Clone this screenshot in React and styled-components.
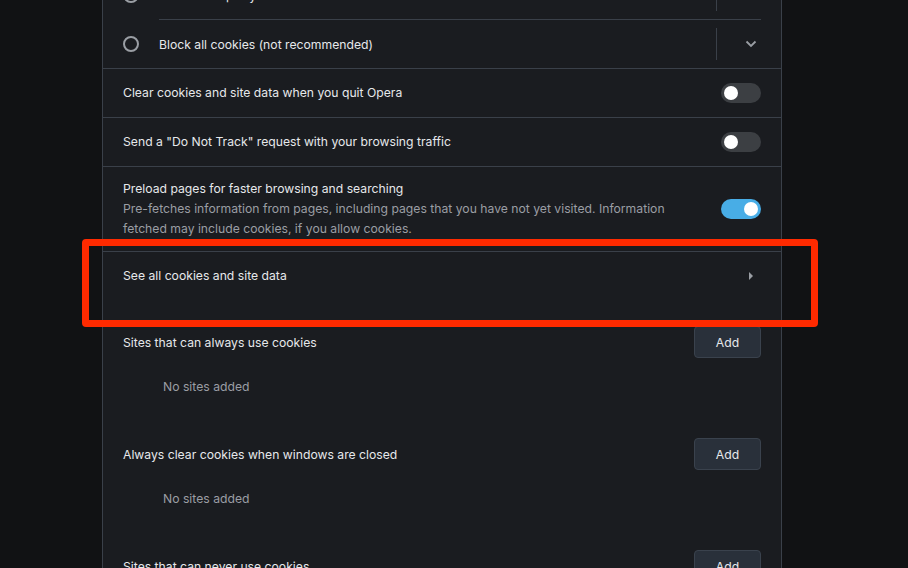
import React from "react";
import styled, { createGlobalStyle } from "styled-components";

const Global = createGlobalStyle`
  html, body { margin: 0; padding: 0; background: #111214; }
  body { font-family: Inter, "Noto Sans", "Liberation Sans", sans-serif; -webkit-font-smoothing: antialiased; }
  #root { height: 568px; overflow: hidden; }
`;

const Page = styled.div`
  display: flex;
  align-items: flex-start;
  height: 568px;
  overflow: hidden;
  background: #111214;
`;

const Panel = styled.div`
  margin-left: 102px;
  width: 678px;
  margin-top: -29px;
  background: #1a1c20;
  border-left: 1px solid #3a4049;
  border-right: 1px solid #3a4049;
  display: flex;
  flex-direction: column;
  flex: none;
  font-size: 12.2px;
  color: #e6e8eb;
  & > * { flex: none; }
`;

const RadioGroup = styled.div`
  display: flex;
  flex-direction: column;
  border-bottom: 1px solid #3a4049;
`;

const RadioRow = styled.div`
  display: flex;
  align-items: center;
  height: 48px;
  padding: 0 20px;
  position: relative;
  flex: none;
  ${(p) =>
    p.$divided &&
    `
    margin-top: 1px;
    &::before {
      content: "";
      position: absolute;
      top: -1px;
      left: 56px;
      right: 20px;
      height: 1px;
      background: #3a4049;
    }
  `}
`;

const RadioCircle = styled.span`
  width: 16px;
  height: 16px;
  box-sizing: border-box;
  border-radius: 50%;
  border: 2px solid #9a9ea4;
  flex: none;
`;

const RadioLabel = styled.span`
  flex: 1;
  margin-left: 20px;
  color: #e6e8eb;
`;

const ExpandArea = styled.div`
  display: flex;
  align-items: center;
  height: 32px;
  border-left: 1px solid #3a4049;
  padding-left: 24px;
`;

const IconBox = styled.span`
  width: 20px;
  height: 20px;
  display: flex;
  align-items: center;
  justify-content: center;
  color: #9a9ea4;
  flex: none;
`;

const Row = styled.div`
  display: flex;
  align-items: center;
  min-height: ${(p) => (p.$tall ? "0" : "48px")};
  padding: ${(p) => (p.$tall ? "12px 20px" : "0 20px")};
  box-sizing: content-box;
  border-bottom: ${(p) => (p.$noBorder ? "none" : "1px solid #3a4049")};
  position: relative;
`;

const RowText = styled.div`
  flex: 1;
  display: flex;
  flex-direction: column;
  line-height: 20px;
  padding-right: 24px;
`;

const Title = styled.div`
  color: #e6e8eb;
`;

const Sub = styled.div`
  color: #9a9ea4;
`;

const Track = styled.span`
  width: 40px;
  height: 20px;
  border-radius: 10px;
  background: ${(p) => (p.$on ? "#48ade6" : "#3c3f43")};
  display: flex;
  align-items: center;
  justify-content: ${(p) => (p.$on ? "flex-end" : "flex-start")};
  padding: 0 3px;
  box-sizing: border-box;
  flex: none;
`;

const Knob = styled.span`
  width: 14px;
  height: 14px;
  border-radius: 50%;
  background: #ffffff;
`;

const Highlight = styled.div`
  position: absolute;
  left: -21px;
  top: -13px;
  width: 736px;
  height: 88px;
  box-sizing: border-box;
  border: 7px solid #ff2a00;
  border-radius: 4px;
  pointer-events: none;
`;

const SiteSection = styled.div`
  display: flex;
  flex-direction: column;
  padding: 0 20px;
`;

const SiteHeader = styled.div`
  display: flex;
  align-items: center;
  justify-content: space-between;
  height: 32px;
`;

const AddButton = styled.button`
  width: 67px;
  height: 32px;
  box-sizing: border-box;
  background: #29303a;
  border: 1px solid #3a424d;
  border-radius: 4px;
  color: #e6e8eb;
  font-family: inherit;
  font-size: 12.2px;
  padding: 0;
`;

const Empty = styled.div`
  color: #9a9ea4;
  line-height: 20px;
  padding: 19px 0 41px 40px;
`;

const Spacer = styled.div`
  height: 26px;
`;

const Toggle = ({ on }) => (
  <Track $on={on}>
    <Knob />
  </Track>
);

const ChevronDown = () => (
  <svg width="12" height="8" viewBox="0 0 12 8" fill="none">
    <path d="M1.5 1.5 L6 6 L10.5 1.5" stroke="currentColor" strokeWidth="1.8" />
  </svg>
);

const TriangleRight = () => (
  <svg width="6" height="10" viewBox="0 0 6 10">
    <path d="M1 1 L5 5 L1 9 Z" fill="currentColor" />
  </svg>
);

const sites = [
  "Sites that can always use cookies",
  "Always clear cookies when windows are closed",
  "Sites that can never use cookies",
];

export default function App() {
  return (
    <>
      <Global />
      <Page>
        <Panel>
          <RadioGroup>
            <RadioRow>
              <RadioCircle />
              <RadioLabel>Block third-party cookies</RadioLabel>
              <ExpandArea>
                <IconBox>
                  <ChevronDown />
                </IconBox>
              </ExpandArea>
            </RadioRow>
            <RadioRow $divided>
              <RadioCircle />
              <RadioLabel>Block all cookies (not recommended)</RadioLabel>
              <ExpandArea>
                <IconBox>
                  <ChevronDown />
                </IconBox>
              </ExpandArea>
            </RadioRow>
          </RadioGroup>
          <Row>
            <RowText>
              <Title>Clear cookies and site data when you quit Opera</Title>
            </RowText>
            <Toggle />
          </Row>
          <Row>
            <RowText>
              <Title>Send a "Do Not Track" request with your browsing traffic</Title>
            </RowText>
            <Toggle />
          </Row>
          <Row $tall>
            <RowText>
              <Title>Preload pages for faster browsing and searching</Title>
              <Sub>
                Pre-fetches information from pages, including pages that you have not yet visited. Information
                fetched may include cookies, if you allow cookies.
              </Sub>
            </RowText>
            <Toggle on />
          </Row>
          <Row $noBorder>
            <RowText>
              <Title>See all cookies and site data</Title>
            </RowText>
            <IconBox>
              <TriangleRight />
            </IconBox>
            <Highlight />
          </Row>
          <Spacer />
          {sites.map((s) => (
            <SiteSection key={s}>
              <SiteHeader>
                <Title>{s}</Title>
                <AddButton>Add</AddButton>
              </SiteHeader>
              <Empty>No sites added</Empty>
            </SiteSection>
          ))}
        </Panel>
      </Page>
    </>
  );
}
